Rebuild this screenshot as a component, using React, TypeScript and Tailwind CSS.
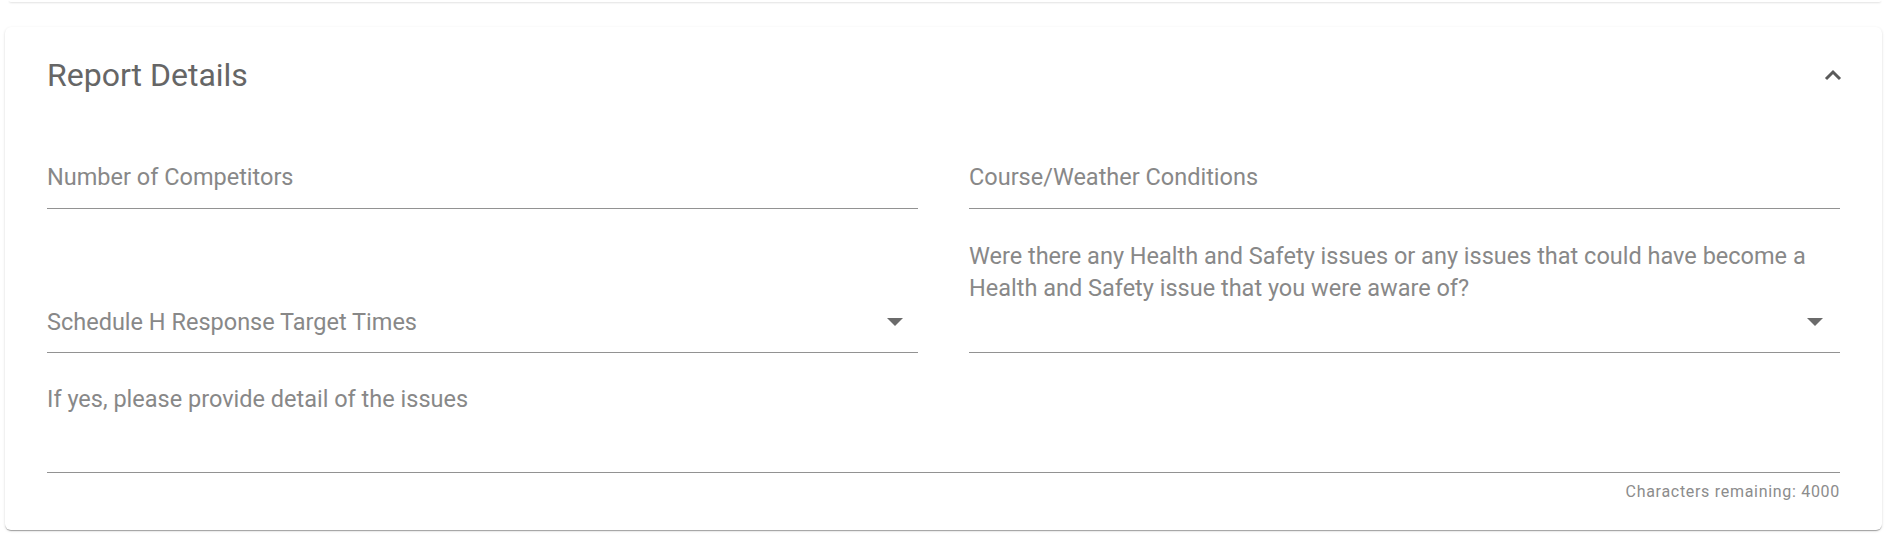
import React from "react";

const font = { fontFamily: "Roboto, 'Liberation Sans', sans-serif" };

const DropArrow = () => (
  <svg width="16" height="8" viewBox="0 0 16 8" className="shrink-0">
    <path d="M0 0 L16 0 L8 8 Z" fill="#6b6b6b" />
  </svg>
);

const ChevronUp = () => (
  <svg width="18" height="12" viewBox="0 0 18 12">
    <path d="M2 10 L9 3 L16 10" fill="none" stroke="#5a5a5a" strokeWidth="3" />
  </svg>
);

export default function App() {
  return (
    <div className="min-h-[546px] bg-white" style={font}>
      <div className="mx-[9px] h-[2px] rounded-b-[4px] shadow-[0_1px_2px_rgba(0,0,0,0.12)]" />
      <div className="mt-[25px] ml-[5px] mr-[8px] rounded-[6px] bg-white px-[42px] pt-[28px] pb-[28px] shadow-[0_2px_1px_-1px_rgba(0,0,0,0.2),0_1px_1px_0_rgba(0,0,0,0.14),0_1px_3px_0_rgba(0,0,0,0.12)]">
        <div className="flex h-[40px] items-center justify-between">
          <h2 className="text-[32px] leading-[40px] font-normal text-[#666]">Report Details</h2>
          <div className="mr-[-2px] flex items-center">
            <ChevronUp />
          </div>
        </div>

        <div className="grid grid-cols-2 gap-x-[51px]">
          <div className="flex h-[114px] items-end border-b border-[#929292] pb-[17px]">
            <span className="text-[23.5px] leading-[28px] text-[#888]">Number of Competitors</span>
          </div>
          <div className="flex h-[114px] items-end border-b border-[#929292] pb-[17px]">
            <span className="text-[23.5px] leading-[28px] text-[#888]">Course/Weather Conditions</span>
          </div>

          <div className="flex h-[144px] items-end border-b border-[#929292] pb-[16px]">
            <div className="flex h-[28px] w-full items-center justify-between pr-[15px]">
              <span className="text-[23.5px] leading-[28px] text-[#888]">Schedule H Response Target Times</span>
              <DropArrow />
            </div>
          </div>
          <div className="flex h-[144px] flex-col justify-end border-b border-[#929292] pb-[16px]">
            <p className="pr-[10px] text-[23.5px] leading-[32px] text-[#888]">
              Were there any Health and Safety issues or any issues that could have become a Health and Safety issue that you were aware of?
            </p>
            <div className="mt-[4px] flex h-[28px] items-center justify-end pr-[17px]">
              <DropArrow />
            </div>
          </div>
        </div>

        <div className="h-[120px] border-b border-[#929292] pt-[32px]">
          <span className="text-[23.5px] leading-[28px] text-[#888]">If yes, please provide detail of the issues</span>
        </div>
        <div className="mt-[9px] text-right text-[16px] leading-[20px] tracking-[0.7px] text-[#8c8c8c]">
          Characters remaining: 4000
        </div>
      </div>
    </div>
  );
}
